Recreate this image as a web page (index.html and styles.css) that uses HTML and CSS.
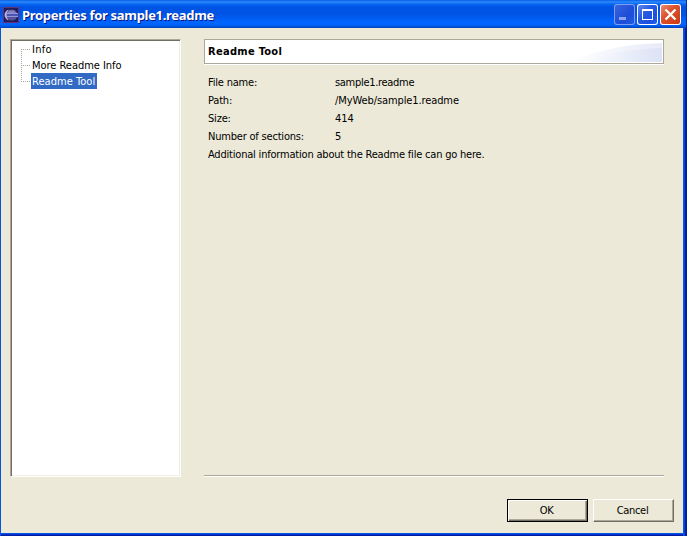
FILE: index.html
```
<!DOCTYPE html>
<html lang="en">
<head>
<meta charset="utf-8">
<title>Properties for sample1.readme</title>
<link rel="stylesheet" href="styles.css">
</head>
<body>
<div class="window">
  <header class="titlebar">
    <svg class="app-icon" width="16" height="16" viewBox="0 0 16 16" shape-rendering="crispEdges">
      <rect width="16" height="16" fill="#64306f"/>
      <rect x="1" y="1" width="14" height="14" fill="#201c5c"/>
      <g shape-rendering="auto">
        <circle cx="9" cy="8" r="5.500" fill="#56539b"/>
        <path d="M6 2.500C0 4 0 12 6 13.500C3 10 3 6 6 2.500z" fill="#b5addb"/>
        <path d="M6 3.500h5l2 2.500H4.500z" fill="#8583c0"/>
      </g>
      <path d="M4 6h11v1H4zM4 9h11v1H4z" fill="#8f94dc"/>
      <path d="M4 7h11v2H4z" fill="#4a54b4"/>
    </svg>
    <h1 class="title">Properties for sample1.readme</h1>
    <div class="controls">
      <span class="control minimize"><svg width="21" height="21"><path d="M5 13h7v3H5z" fill="#8aa4f0"/></svg></span>
      <span class="control maximize"><svg width="21" height="21" shape-rendering="crispEdges"><path d="M5 5h11v11H5zM6 7v8h9V7z" fill="#fff" fill-rule="evenodd"/></svg></span>
      <span class="control close"><svg width="21" height="21"><path d="M5.500 5.500l10 10M15.500 5.500l-10 10" stroke="#fff" stroke-width="2.300"/></svg></span>
    </div>
  </header>
  <main class="content">
    <nav class="tree">
      <ul class="tree-list">
        <li class="node"><span class="label info">Info</span></li>
        <li class="node"><span class="label more">More Readme Info</span></li>
        <li class="node"><span class="label tool selected">Readme Tool</span></li>
      </ul>
    </nav>
    <section class="page">
      <div class="banner">
        <h2 class="banner-title">Readme Tool</h2>
        <svg class="swoosh" width="92" height="20" viewBox="0 0 92 20">
          <defs>
            <linearGradient id="outer"><stop offset="0" stop-color="#fff"/><stop offset="1" stop-color="#e7ebf8"/></linearGradient>
            <linearGradient id="inner"><stop offset="0" stop-color="#fcfdff"/><stop offset="1" stop-color="#dbe2f5"/></linearGradient>
          </defs>
          <path d="M0 20C25 9 55 2 92 1v19z" fill="url(#outer)"/>
          <path d="M12 20C35 12 62 7 92 6v14z" fill="url(#inner)"/>
        </svg>
      </div>
      <dl class="details">
        <dt>File name:</dt><dd class="file">sample1.readme</dd>
        <dt>Path:</dt><dd class="path">/MyWeb/sample1.readme</dd>
        <dt>Size:</dt><dd class="size">414</dd>
        <dt>Number of sections:</dt><dd>5</dd>
      </dl>
      <p class="note">Additional information about the Readme file can go here.</p>
      <hr class="divider">
    </section>
  </main>
  <footer class="actions">
    <button class="button default">OK</button>
    <button class="button">Cancel</button>
  </footer>
</div>
</body>
</html>
```
FILE: styles.css
```
* { box-sizing: border-box; margin: 0; padding: 0; }

body {
  width: 687px;
  height: 536px;
  overflow: hidden;
  background: #ece9d8;
  font: 11px/16px Tahoma, "DejaVu Sans Condensed", "DejaVu Sans", sans-serif;
  font-stretch: condensed;
  letter-spacing: -0.2px;
  color: #000;
}

.window {
  display: flex;
  flex-direction: column;
  height: 536px;
  background:
    linear-gradient(#0855dd, #0855dd) left / 1px 100% no-repeat,
    linear-gradient(90deg, #0855dd 0 1px, #0046e0 1px 2px, #001ea0 2px 4px) right / 4px 100% no-repeat,
    linear-gradient(#0855dd 0 1px, #0032d8 1px 2px, #001ea0 2px 3px) bottom / 100% 3px no-repeat,
    #ece9d8;
}

.titlebar {
  display: flex;
  align-items: center;
  height: 28px;
  padding: 0 6px 0 3px;
  border-right: 1px solid #0030b0;
  padding-right: 5px;
  background: linear-gradient(#0b5ee8 0, #2a8afa 2px, #0868f2 4px, #0054e3 7px, #0054e3 14px, #0061fa 20px, #0066ff 24px, #005bec 26px, #0040b8 28px);
}

.app-icon { margin-top: 1px; }

.title {
  margin: 2px 0 0 3px;
  font: bold 13px/20px "Trebuchet MS", "Noto Sans", sans-serif;
  letter-spacing: -0.3px;
  white-space: nowrap;
  color: #fff;
  text-shadow: 1px 1px 0 #0a1883;
}

.controls { display: flex; gap: 2px; margin: 1px 0 0 auto; }

.control {
  width: 21px;
  height: 21px;
  border-radius: 3px;
  box-shadow: inset 0 0 0 1px #fff;
  background: linear-gradient(135deg, #6a8cf0, #2a5be2 40%, #1c4ee0 70%, #2867f0);
}

.control svg { display: block; }
.minimize { box-shadow: inset 0 0 0 1px #7f9df0; background: linear-gradient(135deg, #3b68df, #1d4cd6 60%, #205be6); }
.close { background: linear-gradient(135deg, #ee9478, #dc5430 40%, #d04018 80%, #bd3713); }

.content { display: flex; height: 449px; padding: 11px 0 0 10px; }

.tree {
  width: 171px;
  height: 438px;
  border: 1px solid;
  border-color: #aca899 #fff #fff #aca899;
  background: #fff;
  box-shadow: inset 1px 1px #716f64, inset -1px -1px #f1efe2;
}

.tree-list {
  list-style: none;
  padding: 1px 0 0 20px;
  background:
    repeating-linear-gradient(#aca899 0 1px, transparent 1px 2px) 10px 9px / 1px 33px no-repeat;
}

.node {
  display: flex;
  height: 16px;
  margin-left: -10px;
  padding-left: 10px;
  background: repeating-linear-gradient(90deg, #aca899 0 1px, transparent 1px 2px) 0 8px / 9px 1px no-repeat;
}

.label { height: 16px; padding: 0 1px; line-height: 18px; white-space: nowrap; }
.info { letter-spacing: 0.3px; }
.more { letter-spacing: -0.03px; }
.tool { letter-spacing: 0.05px; }
.selected { width: 66px; background: #316ac5; color: #fff; }

.page { display: flex; flex-direction: column; width: 460px; margin-left: 23px; }

.banner {
  display: flex;
  align-items: center;
  justify-content: space-between;
  height: 25px;
  padding: 0 1px 0 3px;
  border: 1px solid #aca899;
  background: #fff;
  box-shadow: 0 1px #fff;
}

.banner-title { margin-top: 1px; font-size: 11px; line-height: 16px; letter-spacing: 0.3px; }
.swoosh { margin-top: 1px; }

.details {
  display: grid;
  grid-template-columns: 127px 1fr;
  grid-auto-rows: 18px;
  margin: 10px 0 0 4px;
  line-height: 18px;
  white-space: nowrap;
}

.file { letter-spacing: -0.3px; }
.path { letter-spacing: -0.1px; }
.size { letter-spacing: 0; }
.note { margin-left: 4px; line-height: 18px; white-space: nowrap; }

.divider { margin-top: auto; height: 2px; border: 0; border-top: 1px solid #aca899; border-bottom: 1px solid #fff; }

.actions { display: flex; justify-content: flex-end; gap: 5px; padding: 22px 13px 0 0; }

.button {
  width: 81px;
  height: 23px;
  padding-right: 2px;
  border: 1px solid;
  border-color: #fff #716f64 #716f64 #fff;
  background: #ece9d8;
  box-shadow: inset -1px -1px #aca899;
  font: inherit;
  letter-spacing: -0.3px;
  line-height: 20px;
  color: #000;
}

.default {
  border-color: #000;
  box-shadow: inset 1px 1px #fff, inset -1px -1px #716f64, inset -2px -2px #aca899;
}
```
